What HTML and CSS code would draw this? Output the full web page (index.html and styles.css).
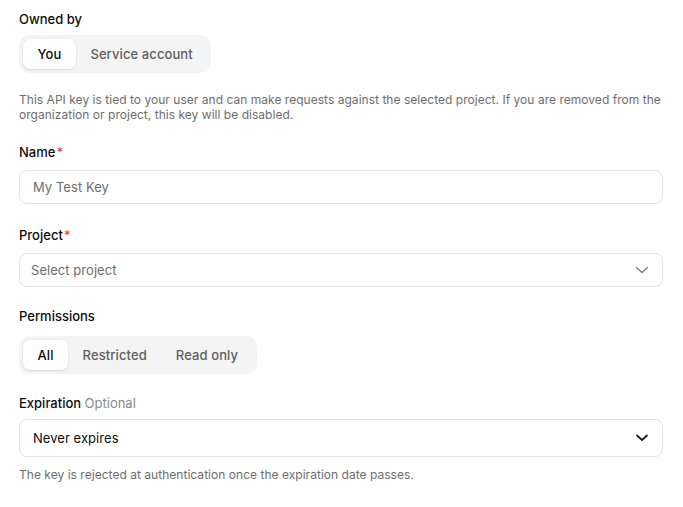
FILE: index.html
```html
<!DOCTYPE html>
<html>
<head>
<meta charset="utf-8">
<link rel="stylesheet" href="styles.css">
</head>
<body>
<div class="form">
  <div class="label l-owned">Owned by</div>
  <div class="seg s-owned">
    <div class="seg-item active">You</div>
    <div class="seg-item">Service account</div>
  </div>
  <p class="hint h-owned">This API key is tied to your user and can make requests against the selected project. If you are removed from the organization or project, this key will be disabled.</p>

  <div class="label l-name">Name<span class="req">*</span></div>
  <div class="field f-name"><span class="placeholder">My Test Key</span></div>

  <div class="label l-project">Project<span class="req">*</span></div>
  <div class="field select f-project">
    <span class="placeholder">Select project</span>
    <svg class="chev chev-light" width="16" height="16" viewBox="0 0 16 16"><polyline points="2.5,5.5 8,10.5 13.5,5.5" fill="none" stroke="currentColor" stroke-width="1.3" stroke-linecap="round" stroke-linejoin="round"/></svg>
  </div>

  <div class="label l-perm">Permissions</div>
  <div class="seg s-perm">
    <div class="seg-item active">All</div>
    <div class="seg-item">Restricted</div>
    <div class="seg-item">Read only</div>
  </div>

  <div class="label l-exp">Expiration <span class="opt">Optional</span></div>
  <div class="field select f-exp">
    <span class="value">Never expires</span>
    <svg class="chev chev-dark" width="16" height="16" viewBox="0 0 16 16"><polyline points="3,5.5 8,10 13,5.5" fill="none" stroke="currentColor" stroke-width="1.8" stroke-linecap="round" stroke-linejoin="round"/></svg>
  </div>
  <p class="hint h-exp">The key is rejected at authentication once the expiration date passes.</p>
</div>
</body>
</html>
```

FILE: styles.css
```css
* { box-sizing: border-box; }
html, body { margin: 0; padding: 0; background: #ffffff; }
body {
  font-family: Inter, "Noto Sans", sans-serif;
  color: #0d0d0d;
  -webkit-font-smoothing: antialiased;
}
.form {
  display: flex;
  flex-direction: column;
  align-items: flex-start;
  padding: 10px 20px 0 19px;
}
.label {
  font-size: 13px;
  line-height: 18px;
  font-weight: 500;
  color: #0d0d0d;
}
.req { color: #e5484d; margin-left: 1px; }
.opt { color: #8a8a8a; font-weight: 400; }

.seg {
  display: flex;
  background: #f4f4f4;
  border-radius: 10px;
  padding: 4px;
}
.seg-item {
  font-size: 13px;
  line-height: 30px;
  height: 30px;
  padding: 0 14.5px;
  color: #5f5f5f;
  font-weight: 500;
  letter-spacing: 0.1px;
  border-radius: 7px;
}
.seg-item.active {
  background: #ffffff;
  color: #0d0d0d;
  box-shadow: 0 1px 2px rgba(0,0,0,0.10), 0 0 0 0.5px rgba(0,0,0,0.04);
}

.hint {
  margin: 0 -1px 0 0;
  font-size: 12px;
  line-height: 15px;
  letter-spacing: 0.03px;
  color: #6e6e6e;
}

.field {
  align-self: stretch;
  display: flex;
  align-items: center;
  justify-content: space-between;
  height: 34px;
  border: 1px solid #e3e3e3;
  border-radius: 8px;
  padding: 0 12px 0 13px;
  font-size: 13px;
  letter-spacing: 0.05px;
}
.placeholder { color: #6e6e6e; }
.value { color: #0d0d0d; }
.f-project { padding-left: 11px; }
.f-exp { height: 38px; }
.chev { display: block; }
.chev-light { color: #7a7a7a; }
.chev-dark { color: #1a1a1a; }

.s-owned { margin-top: 7px; }
.h-owned { margin-top: 19px; }
.l-name { margin-top: 21px; }
.f-name { margin-top: 9px; }
.l-project { margin-top: 22px; }
.f-project { margin-top: 9px; }
.l-perm { margin-top: 20px; }
.s-perm { margin-top: 11px; }
.l-exp { margin-top: 20px; }
.f-exp { margin-top: 7px; }
.h-exp { margin-top: 10px; }
```
